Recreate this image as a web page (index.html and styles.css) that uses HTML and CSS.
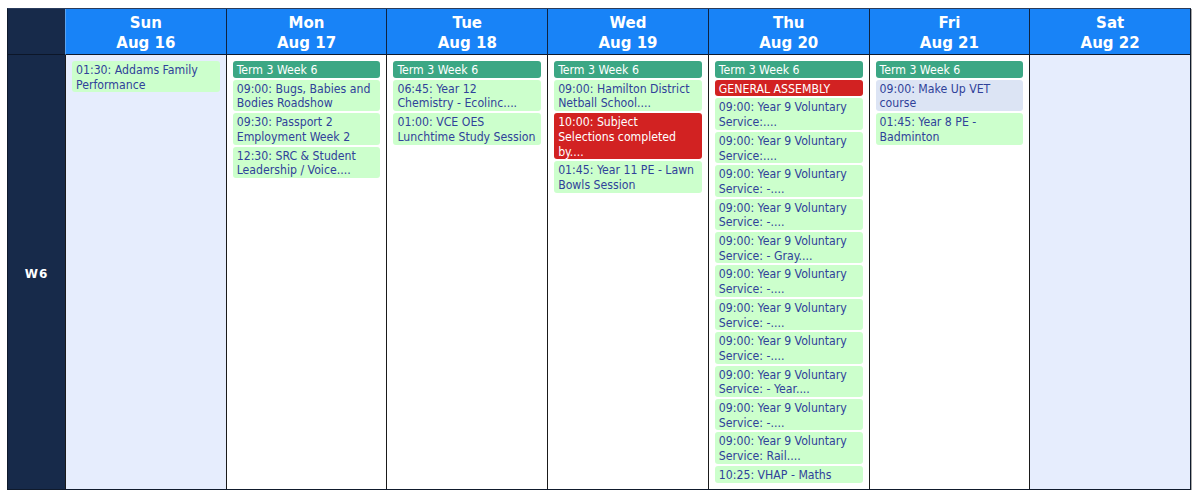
FILE: index.html
```html
<!DOCTYPE html>
<html>
<head>
<meta charset="utf-8">
<link rel="stylesheet" href="styles.css">
</head>
<body>
<div class="cal">
  <div class="corner"></div>
  <div class="day-head">Sun<br>Aug 16</div>
  <div class="day-head">Mon<br>Aug 17</div>
  <div class="day-head">Tue<br>Aug 18</div>
  <div class="day-head">Wed<br>Aug 19</div>
  <div class="day-head">Thu<br>Aug 20</div>
  <div class="day-head">Fri<br>Aug 21</div>
  <div class="day-head">Sat<br>Aug 22</div>

  <div class="week">W6</div>
  <div class="day weekend">
    <div class="ev">01:30: Addams Family<br>Performance</div>
  </div>
  <div class="day">
    <div class="ev term">Term 3 Week 6</div>
    <div class="ev">09:00: Bugs, Babies and<br>Bodies Roadshow</div>
    <div class="ev">09:30: Passport 2<br>Employment Week 2</div>
    <div class="ev">12:30: SRC &amp; Student<br>Leadership / Voice....</div>
  </div>
  <div class="day">
    <div class="ev term">Term 3 Week 6</div>
    <div class="ev">06:45: Year 12<br>Chemistry - Ecolinc....</div>
    <div class="ev">01:00: VCE OES<br>Lunchtime Study Session</div>
  </div>
  <div class="day">
    <div class="ev term">Term 3 Week 6</div>
    <div class="ev">09:00: Hamilton District<br>Netball School....</div>
    <div class="ev alert">10:00: Subject<br>Selections completed<br>by....</div>
    <div class="ev">01:45: Year 11 PE - Lawn<br>Bowls Session</div>
  </div>
  <div class="day">
    <div class="ev term">Term 3 Week 6</div>
    <div class="ev alert">GENERAL ASSEMBLY</div>
    <div class="ev">09:00: Year 9 Voluntary<br>Service:....</div>
    <div class="ev">09:00: Year 9 Voluntary<br>Service:....</div>
    <div class="ev">09:00: Year 9 Voluntary<br>Service: -....</div>
    <div class="ev">09:00: Year 9 Voluntary<br>Service: -....</div>
    <div class="ev">09:00: Year 9 Voluntary<br>Service: - Gray....</div>
    <div class="ev">09:00: Year 9 Voluntary<br>Service: -....</div>
    <div class="ev">09:00: Year 9 Voluntary<br>Service: -....</div>
    <div class="ev">09:00: Year 9 Voluntary<br>Service: -....</div>
    <div class="ev">09:00: Year 9 Voluntary<br>Service: - Year....</div>
    <div class="ev">09:00: Year 9 Voluntary<br>Service: -....</div>
    <div class="ev">09:00: Year 9 Voluntary<br>Service: Rail....</div>
    <div class="ev">10:25: VHAP - Maths</div>
  </div>
  <div class="day">
    <div class="ev term">Term 3 Week 6</div>
    <div class="ev muted">09:00: Make Up VET<br>course</div>
    <div class="ev">01:45: Year 8 PE -<br>Badminton</div>
  </div>
  <div class="day weekend"></div>
</div>
</body>
</html>
```

FILE: styles.css
```css
html, body {
  margin: 0;
  padding: 0;
  background: #ffffff;
}

.cal {
  margin: 8px 0 0 7px;
  width: 1184px;
  height: 482px;
  box-sizing: border-box;
  border: 1px solid #0f1a2c;
  border-top-color: #2a3c5c;
  box-shadow: 1px 1px 0 #a8a8a8;
  display: grid;
  grid-template-columns: 57px repeat(7, 1fr);
  grid-template-rows: 46px 1fr;
  font-family: "DejaVu Sans Condensed", "DejaVu Sans", sans-serif;
}

.corner {
  background: #172a4a;
  border-bottom: 1px solid #0c1628;
}

.day-head {
  background: #1883f7;
  border-left: 1px solid #0e2340;
  border-bottom: 1px solid #0e1a2e;
  color: #ffffff;
  font-family: "DejaVu Sans", sans-serif;
  font-weight: bold;
  font-size: 15px;
  line-height: 20px;
  text-align: center;
  padding-top: 4px;
}

.day-head:nth-child(2) {
  border-left-color: #5aa2ee;
}

.week {
  background: #172a4a;
  color: #ffffff;
  font-family: "DejaVu Sans", sans-serif;
  font-weight: bold;
  font-size: 12px;
  letter-spacing: 1px;
  padding-top: 3px;
  display: flex;
  align-items: center;
  justify-content: center;
}

.day {
  background: #ffffff;
  border-left: 1px solid #1a1a1a;
  padding: 6px 6px 0 6px;
  display: flex;
  flex-direction: column;
  gap: 2px;
  min-width: 0;
}

.day.weekend {
  background: #e6edfd;
}

.ev {
  background: #ccffcc;
  color: #30429a;
  font-size: 12.2px;
  line-height: 14.7px;
  padding: 2px 4px 0 4px;
  border-radius: 3px;
}

.ev.term {
  background: #3ca784;
  color: #ffffff;
}

.ev.alert {
  background: #d22222;
  color: #ffffff;
}

.ev.muted {
  background: #dce4f4;
}
```
